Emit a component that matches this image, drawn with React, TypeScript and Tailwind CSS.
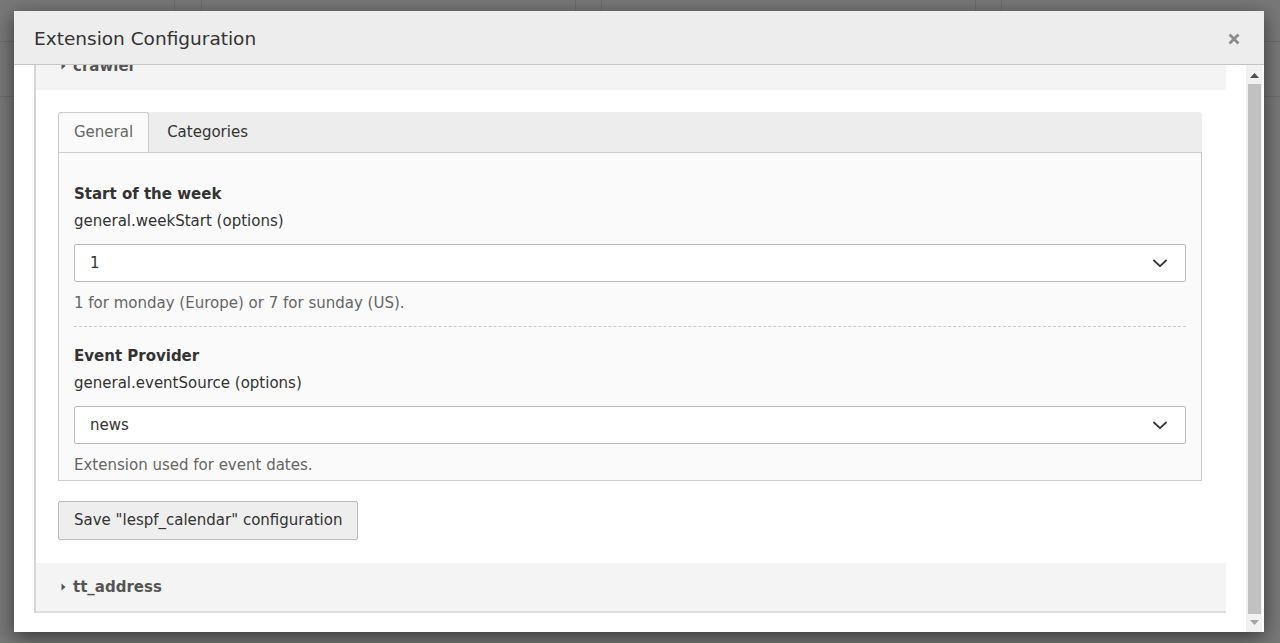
import type { ReactNode } from "react";

function Caret() {
  return (
    <svg width="5" height="8" viewBox="0 0 5 8" className="shrink-0">
      <path d="M0.5 0.5 L4.5 4 L0.5 7.5 Z" fill="#555" />
    </svg>
  );
}

function Chevron() {
  return (
    <svg width="14" height="9" viewBox="0 0 14 9" className="shrink-0">
      <path
        d="M1 1.5 L7 7.2 L13 1.5"
        fill="none"
        stroke="#333"
        strokeWidth="1.8"
        strokeLinecap="round"
        strokeLinejoin="round"
      />
    </svg>
  );
}

type FieldProps = {
  label: string;
  path: string;
  value: string;
  help: string;
  className?: string;
};

function SelectField({ label, path, value, help, className }: FieldProps) {
  return (
    <div className={className}>
      <div className="text-[15px] font-bold leading-5 text-[#333]">{label}</div>
      <div className="mt-[7px] text-[15px] leading-5 text-[#333]">{path}</div>
      <div className="mt-[13px] flex h-[38px] items-center justify-between rounded-[2px] border border-[#bbb] bg-white pl-[15px] pr-[18px] text-[15px] text-[#333]">
        <span>{value}</span>
        <Chevron />
      </div>
      <div className="mt-[11px] text-[15px] leading-5 text-[#666]">{help}</div>
    </div>
  );
}

function PanelHeading({ children }: { children: ReactNode }) {
  return (
    <div className="flex h-[48px] items-center gap-[7px] pl-[25px] text-[15px] font-bold text-[#555]">
      <Caret />
      <span>{children}</span>
    </div>
  );
}

export default function App() {
  return (
    <div className="relative h-[643px] w-[1280px] overflow-hidden bg-[#787878] font-['DejaVu_Sans',sans-serif]">
      {/* page behind the overlay */}
      <div className="flex h-[42px] border-b border-[#6c6c6c]">
        <div className="w-[175px] border-r border-[#6c6c6c]" />
        <div className="w-[27px] border-r border-[#6c6c6c]" />
        <div className="w-[374px] border-r border-[#6c6c6c]" />
        <div className="w-[26px] border-r border-[#6c6c6c]" />
        <div className="w-[374px] border-r border-[#6c6c6c]" />
        <div className="w-[26px] border-r border-[#6c6c6c]" />
      </div>
      <div className="mt-[54px] h-px bg-[#6c6c6c]" />

      {/* modal */}
      <div className="absolute left-[14px] top-[11px] flex h-[621px] w-[1250px] flex-col bg-white shadow-[0_5px_18px_rgba(0,0,0,0.55)]">
        <div className="flex h-[54px] shrink-0 items-center justify-between border-b border-[#c4c4c4] bg-[#ededed] pl-5 pr-[24px] pt-[2px]">
          <h1 className="text-[18.5px] text-[#333]">Extension Configuration</h1>
          <svg width="12" height="12" viewBox="0 0 12 12">
            <path d="M1.5 1.5 L10.5 10.5 M10.5 1.5 L1.5 10.5" stroke="#8c8c8c" strokeWidth="2.8" />
          </svg>
        </div>

        <div className="flex min-h-0 flex-1">
          <div className="flex-1 overflow-hidden pl-[20px] pr-5">
            <div className="border-l-2 border-[#d6d6d6]">
              {/* crawler, scrolled mostly out of view */}
              <div className="h-[25px] overflow-hidden bg-[#f4f4f4]">
                <div className="-mt-[23px]">
                  <PanelHeading>crawler</PanelHeading>
                </div>
              </div>

              <div className="pb-[23px] pl-[22px] pr-[24px] pt-[22px]">
                <div className="flex h-[40px] rounded-t-[3px] bg-[#ededed]">
                  <div className="flex items-center rounded-t-[3px] border border-b-0 border-[#ccc] bg-[#fafafa] px-[15px] text-[15px] text-[#666]">
                    General
                  </div>
                  <div className="flex items-center px-[18px] text-[15px] text-[#333]">Categories</div>
                </div>
                <div className="border border-[#ccc] bg-[#fafafa] px-[15px] pb-[5px] pt-[31px]">
                  <SelectField
                    label="Start of the week"
                    path="general.weekStart (options)"
                    value="1"
                    help="1 for monday (Europe) or 7 for sunday (US)."
                  />
                  <div className="mt-[13px] border-t border-dashed border-[#ccc]" />
                  <SelectField
                    className="pt-[19px]"
                    label="Event Provider"
                    path="general.eventSource (options)"
                    value="news"
                    help="Extension used for event dates."
                  />
                </div>
                <button className="mt-[20px] h-[39px] rounded-[2px] border border-[#bbb] bg-[#eee] px-[15px] text-[15px] text-[#333]">
                  Save "lespf_calendar" configuration
                </button>
              </div>

              <div className="border-b-2 border-[#dedede] bg-[#f4f4f4]">
                <PanelHeading>tt_address</PanelHeading>
              </div>
            </div>
          </div>

          {/* scrollbar */}
          <div className="mr-[2px] flex w-[16px] flex-col items-center bg-[#f1f1f1]">
            <svg width="9" height="5" viewBox="0 0 9 5" className="mt-[8px]">
              <path d="M0 5 L4.5 0 L9 5 Z" fill="#505050" />
            </svg>
            <div className="mt-[6px] w-[13px] flex-1 bg-[#c1c1c1]" />
            <svg width="9" height="5" viewBox="0 0 9 5" className="mb-[7px] mt-[6px]">
              <path d="M0 0 L9 0 L4.5 5 Z" fill="#a3a3a3" />
            </svg>
          </div>
        </div>
      </div>
    </div>
  );
}
